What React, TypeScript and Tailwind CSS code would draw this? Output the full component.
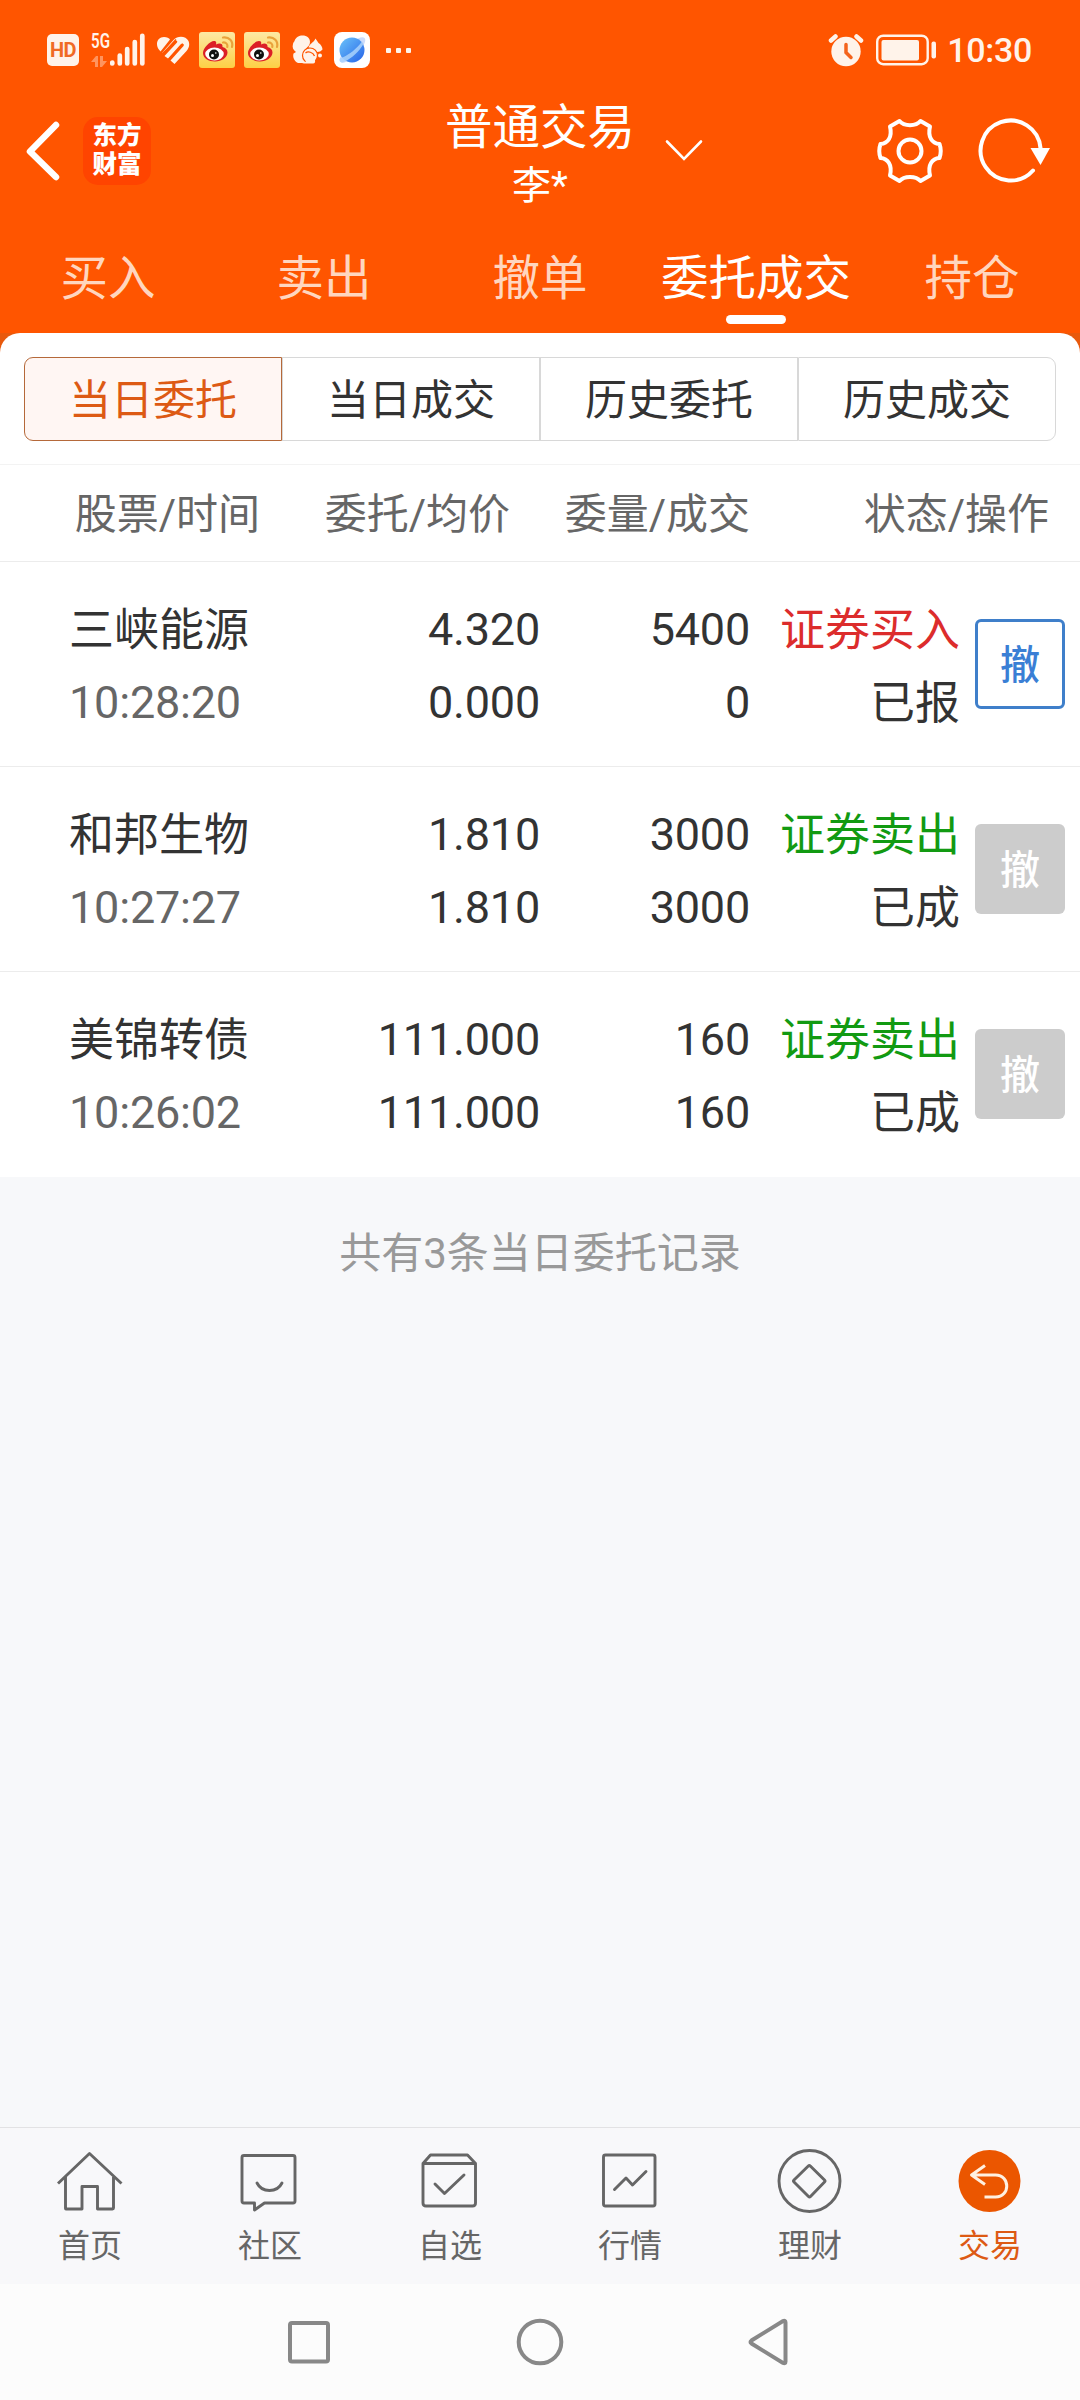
import { useState } from "react";
import clsx from "clsx";

const topTabs = ["买入", "卖出", "撤单", "委托成交", "持仓"];
const subTabs = ["当日委托", "当日成交", "历史委托", "历史成交"];

const orders = [
  {
    name: "三峡能源",
    time: "10:28:20",
    price: "4.320",
    avgPrice: "0.000",
    amount: "5400",
    filled: "0",
    side: "buy",
    status: "已报",
    cancelable: true,
  },
  {
    name: "和邦生物",
    time: "10:27:27",
    price: "1.810",
    avgPrice: "1.810",
    amount: "3000",
    filled: "3000",
    side: "sell",
    status: "已成",
    cancelable: false,
  },
  {
    name: "美锦转债",
    time: "10:26:02",
    price: "111.000",
    avgPrice: "111.000",
    amount: "160",
    filled: "160",
    side: "sell",
    status: "已成",
    cancelable: false,
  },
];

const WeiboIcon = () => (
  <svg className="h-9 w-9" viewBox="0 0 36 36">
    <defs>
      <linearGradient id="weibo" x1="0" y1="0" x2="0" y2="1">
        <stop offset="0" stopColor="#fde9a4" />
        <stop offset="1" stopColor="#fdd045" />
      </linearGradient>
    </defs>
    <rect width="36" height="36" rx="3" fill="url(#weibo)" />
    <path
      d="M4 21c0-5 7-12 11-12 2.500 0 2.500 2 2 3.500 3-1.500 7-1.500 6.500 2.500 3 .8 5 2.500 5 5.500 0 5-6 9-12.500 9S4 26 4 21z"
      fill="#dc1f26"
    />
    <ellipse cx="15.500" cy="22" rx="9.300" ry="6.500" fill="#fff" />
    <circle cx="15" cy="22.500" r="5" fill="#111" />
    <circle cx="13.500" cy="23.500" r="1.500" fill="#fff" />
    <circle cx="16.800" cy="21" r=".8" fill="#fff" />
    <path
      d="M24 10.500c3-.5 5 2 4.300 4.500M24 5.500c6-1 10.500 4 9 9.500"
      fill="none"
      stroke="#e9a23b"
      strokeWidth="2.200"
      strokeLinecap="round"
    />
  </svg>
);

const StatusBar = () => (
  <div className="flex h-[98px] items-center justify-between pt-[2px] pr-[48px] pl-[47px] text-[#fff3ea]">
    <div className="flex h-9 items-center">
      <div className="flex h-8 w-8 items-center justify-center rounded-[5px] bg-[#fff3ea] text-[20px] font-bold tracking-tight text-[#f06a25]">
        HD
      </div>
      <div className="ml-3 flex h-[34px] w-[54px]">
        <div className="flex w-[19px] flex-col justify-between">
          <span className="origin-left scale-x-[0.72] text-[21px] leading-[16px] font-semibold">
            5G
          </span>
          <svg className="h-[11px] w-4 opacity-40" viewBox="0 0 16 11">
            <path d="M0 6 5 0h2v11H4V6zM16 5l-5 6H9V0h3v5z" fill="currentColor" />
          </svg>
        </div>
        <svg className="h-[34px] w-[35px]" viewBox="0 0 35 34">
          <path
            d="M2.300 29.500v1M9.800 22.500v8M17.200 16v14.500M24.800 9v21.500M32.300 2.800v27.700"
            stroke="currentColor"
            strokeWidth="4.700"
            strokeLinecap="round"
          />
        </svg>
      </div>
      <svg className="ml-[11px] h-[30px] w-[34px]" viewBox="0 0 34 30">
        <path
          d="M2.500 14C-1 8 2 2 8 2c3 0 5 1 6 2.500L4.500 16.500zM5.500 18.500 17.500 5C22 0 30 1 32.500 6c1.500 4 .5 7-2 10L18.500 29l-4-3.500L27.500 11c1-1.500-1-3.500-2.500-2L12 23.500 8.500 21 21 7.500c1-1-.5-2.500-2-1.500z"
          fill="currentColor"
        />
        <path d="M6 20 20 4.500M13 24.500 27 9" stroke="#ff5500" strokeWidth="1.500" />
      </svg>
      <div className="ml-[9px] flex gap-[9px]">
        <WeiboIcon />
        <WeiboIcon />
      </div>
      <svg className="ml-3 h-[30px] w-[31px]" viewBox="0 0 31 30">
        <path
          d="M6 28C2 26 .5 22 1.500 18.500L4 17C1 15 0 12 1 9c.3-1.500 1-2 1.500-3C4 2 7 .5 10.500.5 15 .5 18 3 18 7c0 3-2 4.500-4 6.500-2.500 2.500-4 5-3 8 .5 3 2.500 5 4 6.500z"
          fill="currentColor"
        />
        <path
          d="M16.500 12.500C18 8 21 8.500 23.500 3.500L26.500 8c2.500 1.500 4 4 4 6.500-2 2.500-5 3-8 2-2-2.500-4-3.500-6-4z"
          fill="currentColor"
        />
        <circle cx="18" cy="20.500" r="7.500" fill="currentColor" stroke="#ff5500" strokeWidth="1.200" />
        <path d="M15 23c2-2.500 7-1.500 8 2 .4 2 0 3.500-2 3.500H10c3-.5 4.500-2 5-5.500z" fill="currentColor" />
        <path d="M13.500 18c2.500-2 7.500-1 9 3" fill="none" stroke="#ff5500" strokeWidth="1.300" />
        <circle cx="28" cy="20.500" r="2" fill="currentColor" />
      </svg>
      <svg className="ml-[11px] h-9 w-9" viewBox="0 0 36 36">
        <defs>
          <linearGradient id="planet" x1="0" y1="0" x2="1" y2="1">
            <stop offset="0" stopColor="#6cc3fa" />
            <stop offset="1" stopColor="#2563e8" />
          </linearGradient>
        </defs>
        <rect width="36" height="36" rx="8" fill="#fff" />
        <ellipse
          cx="18.500"
          cy="18"
          rx="17"
          ry="6"
          transform="rotate(-45 18.500 18)"
          fill="#cddcfb"
        />
        <circle cx="18" cy="18" r="12.500" fill="url(#planet)" />
        <path
          d="M6 26c-1.500 4 1 5.500 5 3.500C18 26 25 19.500 29.500 12l-1.500-2.500C22.500 17 15 22.500 9.500 25c-1.500.7-3 1-3.500 1z"
          fill="#a9d2fc"
          opacity=".85"
        />
      </svg>
      <div className="ml-[16px] flex gap-[5px]">
        <span className="h-[5px] w-[5px] rounded-[1px] bg-[#fff3ea]" />
        <span className="h-[5px] w-[5px] rounded-[1px] bg-[#fff3ea]" />
        <span className="h-[5px] w-[5px] rounded-[1px] bg-[#fff3ea]" />
      </div>
    </div>

    <div className="flex items-center">
      <svg className="h-[34px] w-[36px]" viewBox="0 0 36 34">
        <circle cx="18" cy="18.500" r="14.700" fill="currentColor" />
        <path
          d="M3 7.500 7.500 3.500M28.500 3.500 33 7.500"
          stroke="currentColor"
          strokeWidth="4.500"
          strokeLinecap="round"
        />
        <path
          d="M18 11.500v8l5 5"
          fill="none"
          stroke="#f4631c"
          strokeWidth="3.500"
          strokeLinecap="round"
        />
      </svg>
      <svg className="ml-3 h-8 w-[61px]" viewBox="0 0 61 32">
        <rect
          x="1.200"
          y="1.700"
          width="50.500"
          height="28.500"
          rx="6"
          fill="none"
          stroke="currentColor"
          strokeWidth="2.400"
        />
        <rect x="5.500" y="6" width="37.500" height="20.500" rx="2" fill="currentColor" />
        <rect x="55.500" y="7.500" width="4.500" height="17" rx="2" fill="currentColor" />
      </svg>
      <span className="ml-[10px] text-[34px] leading-[40px] font-medium tracking-[-0.3px]">10:30</span>
    </div>
  </div>
);

const TitleBar = () => (
  <div className="flex h-[114px]">
    <div className="flex w-[444px] items-center pb-2 pl-6">
      <svg className="h-[60px] w-[38px]" viewBox="0 0 38 60" fill="none">
        <path
          d="M32 4 6 30.500 32 56"
          stroke="#fff"
          strokeWidth="6.500"
          strokeLinecap="round"
          strokeLinejoin="round"
        />
      </svg>
      <div className="ml-[21px] flex h-[68px] w-[68px] flex-col items-center justify-center rounded-[15px] bg-[#ff4400] pb-[2px] text-[24.500px] leading-[29px] font-black text-white">
        <span>东方</span>
        <span>财富</span>
      </div>
    </div>
    <div className="w-48 pt-px text-center text-white">
      <h1 className="text-[47.500px] leading-[58px]">普通交易</h1>
      <p className="text-[39px] leading-[58px]">李*</p>
    </div>
    <div className="flex flex-1 items-center pb-2 pl-[29px]">
      <svg className="h-[24px] w-[38px]" viewBox="0 0 38 24" fill="none">
        <path d="M2 2.500 19 20 36 2.500" stroke="#fff" strokeWidth="2.600" strokeLinecap="round" />
      </svg>
      <svg
        className="ml-[172px] h-[70px] w-[70px]"
        viewBox="-35 -35 70 70"
        fill="none"
        stroke="#fff"
        strokeWidth="4"
        strokeLinejoin="round"
      >
        <path d="M-10.500 -30C-6 -24.500 6 -24.500 10.500 -30L20 -24.500C17.500 -14 22 -7.500 29.500 -7Q32 0 29.500 7C22 7.500 17.500 14 20 24.500L10.500 30C6 24.500 -6 24.500 -10.500 30L-20 24.500C-17.500 14 -22 7.500 -29.500 7Q-32 0 -29.500 -7C-22 -7.500 -17.500 -14 -20 -24.500Z" />
        <circle r="11.500" />
      </svg>
      <svg className="ml-[32px] h-[70px] w-[76px]" viewBox="0 0 76 70" fill="none">
        <path
          d="M56 54.500A30 30 0 1 1 63.500 32"
          stroke="#fff"
          strokeWidth="4"
          strokeLinecap="round"
        />
        <path d="M53.500 32h19.500L63.500 49z" fill="#fff" />
      </svg>
    </div>
  </div>
);

const navIcons = {
  home: (
    <>
      <path d="M4 38.500 35.500 8.500 67.500 38.500" />
      <path d="M11.500 32v31.500q0 .5.500.5H28V41.500h15.500V64h15q1 0 1-1V32" />
    </>
  ),
  community: (
    <>
      <path d="M10 10.500h49q2 0 2 2V56q0 2-2 2H30.500L20.500 65V58H10q-2 0-2-2V12.500q0-2 2-2z" />
      <path d="M23 38c5 10 20 10 25 0" strokeLinecap="round" />
    </>
  ),
  watchlist: (
    <>
      <path d="M9 18.500h52.500V58q0 3-3 3H12q-3 0-3-3zL16.500 10h37l8 8.500" />
      <path d="M21 39 30.500 48.500 50 30" strokeLinecap="round" />
    </>
  ),
  market: (
    <>
      <rect x="9.500" y="10" width="51.500" height="51" rx="2" />
      <path d="M20.500 44.500 32 33l6.500 7L52 26.500" strokeLinecap="round" />
    </>
  ),
  wealth: (
    <>
      <circle cx="35.500" cy="36" r="30.500" />
      <path d="M34.300 21q1-1 2 0L50.500 35q1 1 0 2L36.500 51.500q-1 1-2 0L20 37q-1-1 0-2z" />
    </>
  ),
  trade: (
    <>
      <circle cx="35.500" cy="36" r="31" fill="#eb5600" stroke="none" />
      <path
        d="M31 20.500 17.500 30 31 39.500M17.500 30H41.500c15 0 15 22 0 22H30.500"
        stroke="#fff0e0"
        strokeWidth="3"
      />
    </>
  ),
};

const navItems = [
  { label: "首页", icon: navIcons.home },
  { label: "社区", icon: navIcons.community },
  { label: "自选", icon: navIcons.watchlist },
  { label: "行情", icon: navIcons.market },
  { label: "理财", icon: navIcons.wealth },
  { label: "交易", icon: navIcons.trade },
];

const BottomNav = () => (
  <nav className="grid h-[157px] grid-cols-6 border-t border-[#e2e2e4] bg-[#f8f8fa]">
    {navItems.map((item) => (
      <div
        key={item.label}
        className={clsx(
          "flex flex-col items-center pt-[17px]",
          item.label === "交易" ? "text-[#dd5a14]" : "text-[#666]"
        )}
      >
        <svg
          className="h-[72px] w-[72px]"
          viewBox="0 0 72 72"
          fill="none"
          stroke="currentColor"
          strokeWidth="2.900"
          strokeLinejoin="round"
        >
          {item.icon}
        </svg>
        <span className="mt-[5px] text-[32px] leading-[48px]">{item.label}</span>
      </div>
    ))}
  </nav>
);

const SystemNav = () => (
  <div className="flex h-[116px] items-center justify-center gap-[180px] bg-[#fcfcfc]">
    <svg className="h-[50px] w-[50px]" viewBox="0 0 50 50" fill="none" stroke="#888" strokeWidth="4">
      <rect x="5" y="6" width="38" height="38.500" rx="2" />
    </svg>
    <svg className="h-[50px] w-[50px]" viewBox="0 0 50 50" fill="none" stroke="#888" strokeWidth="4">
      <circle cx="25" cy="25" r="21.300" />
    </svg>
    <svg className="h-[50px] w-[50px]" viewBox="0 0 50 50" fill="none" stroke="#888" strokeWidth="4">
      <path d="M6.500 23.500q-2 1.500 0 3L38 46q2.500 1 2.500-1.500V5.500q0-2.500-2.500-1.500z" />
    </svg>
  </div>
);

const App = () => {
  const [topTab, setTopTab] = useState("委托成交");
  const [subTab, setSubTab] = useState("当日委托");

  return (
    <div className="flex h-[2400px] w-[1080px] flex-col overflow-hidden bg-[#f7f8fa] font-['Roboto','Noto_Sans_CJK_SC',sans-serif] text-[#333]">
      <header className="bg-[#ff5500]">
        <StatusBar />
        <TitleBar />
        <div className="grid h-[121px] grid-cols-5">
          {topTabs.map((tab) => (
            <button
              key={tab}
              onClick={() => setTopTab(tab)}
              className={clsx(
                "flex flex-col items-center pt-[36px] text-[47.500px] leading-[62px] whitespace-nowrap",
                tab === topTab ? "text-white" : "text-[#ffd6bf]"
              )}
            >
              {tab}
              {tab === topTab && <span className="mt-[5px] h-[9px] w-[60px] rounded-full bg-white" />}
            </button>
          ))}
        </div>
      </header>

      <div className="bg-[#e8590c]">
        <div className="h-[132px] rounded-t-[20px] border-b border-[#f3f3f3] bg-white px-6 pt-6">
          <div className="grid h-[84px] grid-cols-4">
            {subTabs.map((tab) => (
              <button
                key={tab}
                onClick={() => setSubTab(tab)}
                className={clsx(
                  "border pt-[3px] text-[42px] leading-[79px] first:rounded-l-[9px] last:rounded-r-[9px]",
                  tab === subTab
                    ? "border-[#b5693a] bg-[#fff6f3] text-[#dd5a14]"
                    : "border-[#d8d8d8]"
                )}
              >
                {tab}
              </button>
            ))}
          </div>
        </div>
      </div>

      <div className="flex h-[97px] items-center border-b border-[#ececec] bg-white pt-[3px] text-[42px] text-[#666]">
        <span className="w-[260px] text-right">股票/时间</span>
        <span className="w-[250px] text-right">委托/均价</span>
        <span className="w-[240px] text-right">委量/成交</span>
        <span className="w-[299px] text-right">状态/操作</span>
      </div>

      {orders.map((order, index) => (
        <div
          key={order.name}
          className={clsx(
            "flex h-[205px] border-b bg-white pt-[31px] text-[45px] leading-[73px]",
            index === orders.length - 1 ? "border-white" : "border-[#ececec]"
          )}
        >
          <div className="w-[260px] pl-[69px]">
            <p className="relative top-px whitespace-nowrap">{order.name}</p>
            <p className="tracking-[-0.2px] text-[#666]">{order.time}</p>
          </div>
          <div className="w-[280px] text-right tracking-[-0.2px]">
            <p>{order.price}</p>
            <p>{order.avgPrice}</p>
          </div>
          <div className="w-[210px] text-right tracking-[-0.2px]">
            <p>{order.amount}</p>
            <p>{order.filled}</p>
          </div>
          <div className="w-[210px] pt-px text-right">
            <p className={order.side === "buy" ? "text-[#dc2c2c]" : "text-[#129a12]"}>
              {order.side === "buy" ? "证券买入" : "证券卖出"}
            </p>
            <p>{order.status}</p>
          </div>
          <button
            disabled={!order.cancelable}
            className={clsx(
              "mt-[26px] ml-[15px] flex h-[90px] w-[90px] items-center justify-center rounded-[6px] pt-[3px] text-[40px] font-medium",
              order.cancelable
                ? "border-[3px] border-[#3f7fca] text-[#3a7fd5]"
                : "bg-[#ccc] text-white"
            )}
          >
            撤
          </button>
        </div>
      ))}

      <main className="flex-1 pt-[47px] text-center text-[42px] leading-[60px] text-[#999]">
        共有{orders.length}条当日委托记录
      </main>

      <BottomNav />
      <SystemNav />
    </div>
  );
};

export default App;
